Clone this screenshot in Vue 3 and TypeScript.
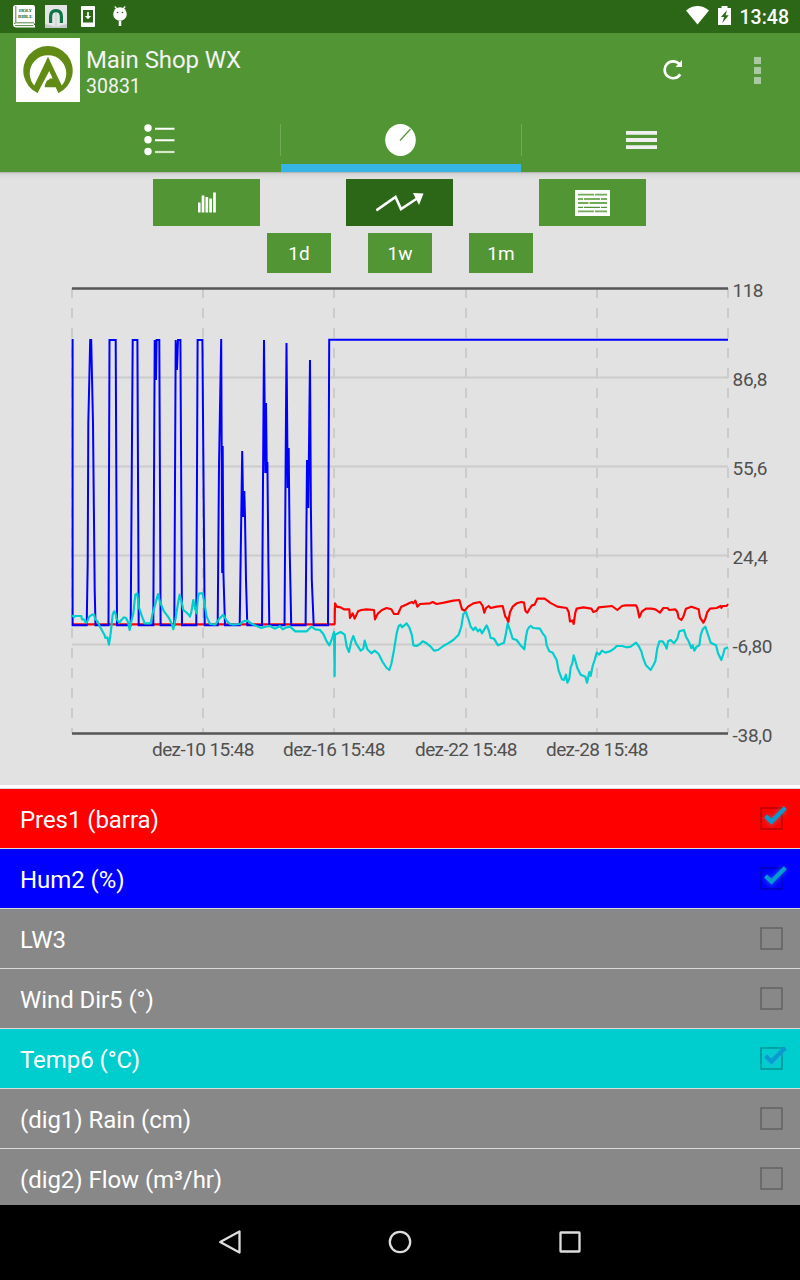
<script setup lang="ts">
interface Sensor {
  name: string
  color: string
  checked: boolean
}

interface TraceSection {
  x: number
  points: string
}

const sensors: Sensor[] = [
  { name: 'Pres1 (barra)', color: 'red', checked: true },
  { name: 'Hum2 (%)', color: 'blue', checked: true },
  { name: 'LW3', color: 'gray', checked: false },
  { name: 'Wind Dir5 (°)', color: 'gray', checked: false },
  { name: 'Temp6 (°C)', color: 'cyan', checked: true },
  { name: '(dig1) Rain (cm)', color: 'gray', checked: false },
  { name: '(dig2) Flow (m³/hr)', color: 'gray', checked: false },
]

const ranges: string[] = ['1d', '1w', '1m']
const gridX: number[] = [72, 203, 334, 466, 597, 728]
const gridY: number[] = [377.5, 466.5, 555.5, 644.5]

const yLabels = [
  { text: '118', y: 297, width: 31 },
  { text: '86,8', y: 386, width: 35 },
  { text: '55,6', y: 475, width: 35 },
  { text: '24,4', y: 564, width: 35.5 },
  { text: '-6,80', y: 653, width: 40 },
  { text: '-38,0', y: 742, width: 40 },
]

const xLabels = [
  { text: 'dez-10 15:48', x: 152 },
  { text: 'dez-16 15:48', x: 283 },
  { text: 'dez-22 15:48', x: 415 },
  { text: 'dez-28 15:48', x: 546 },
]

const humidity =
  'M72.6 339V625.3H86.7L87.7 563L88.3 423L90.2 340H91.2L93 423L94.7 590L95.5 625.3' +
  'H108.5L109.5 340H115.7L117 625.3H130.7L131.5 510L132.7 340H137.4L138.7 625.3' +
  'H153.3L154.7 340L156 380L156.6 340H159.3L160.6 625.3H174.3L175.7 340L177 370L178 340H180.4L182 625.3' +
  'H196.3L197.6 340H202.4L204.7 625.3H217.7L219 465L221.200 339L222.2 573L222.7 446L223.4 573L225 625.3' +
  'H239.7L241.3 513L242.2 451L243.3 517L244.3 491L245 517L246 580L247.3 625.3' +
  'H262L264 340L265.3 473L266 403L266.8 473L267.4 462L268.4 563L269.3 625.3' +
  'H284.5L286.5 343L287.7 488L288.7 448L289.7 550L291.2 625.3' +
  'H305.6L307 460L308.3 508L310 360L310.9 508L311.8 580L313.7 625.3H328L329.2 339.7H728'

const pressure: TraceSection[] = [
  { x: 60, points: '38,133 824,133' },
  { x: 320, points: '42,133 44,132 45,70 50,80 62,82 72,88 88,88 90,114 98,100 104,116 114,94 124,90 140,88 162,90 165,118 174,100 186,90 200,84 214,88 222,102 234,102 244,80 258,74 270,68 276,66 280,70 286,62 292,80 300,72 330,70 338,66 350,72 372,68 400,62 418,60 426,88 434,92 444,80 460,70 480,66 488,78 493,98 498,84 506,78 512,84 530,80 548,78 556,110 560,114 565,126 570,96 578,80 590,70 604,66 612,68 616,92 622,98 630,84' },
  { x: 530, points: '0,84 6,76 14,74 22,56 44,56 60,68 82,80 110,84 116,96 120,124 128,122 131,132 136,98 140,86 160,82 184,86 190,96 200,92 206,82 246,78 262,90 276,78 286,76 318,76 322,84 328,112 336,94 348,86 364,86 376,88 390,98 400,84 412,84 418,90 436,88 442,96 446,114 454,120 460,110 468,86 484,80 506,88 510,112 520,128 526,116 532,96 540,86 560,84 572,78 574,84 578,78 590,78 594,72' },
]

const temperature: TraceSection[] = [
  { x: 60, points: '36,106 42,112 46,108 64,108 66,118 72,118 76,126 80,128 88,110 96,104 102,104 106,118 112,124 120,140 134,166 136,174 142,172 147,194 152,160 158,104 162,94 166,98 170,118 178,128 184,120 192,112 198,114 204,126 209,150 214,124 220,100 226,44 232,40 236,80 244,104 254,130 272,130 278,100 286,72 294,42 300,66 312,94 324,110 330,120 336,134 340,148 346,120 354,70 359,44 364,62 370,90 378,96 386,104 390,110 394,96 400,60 404,80 410,100 414,50 418,40 428,40 434,74 440,110 450,132 466,134 478,116 490,104 500,122 510,132 520,134 540,132 550,124 562,122 576,132 590,138 604,144 616,140 630,138 644,146 660,138 668,148 680,142 690,140 706,154 740,154 754,140 766,148 780,150 790,162 800,184 808,196 816,176 822,156 824,288 825,164' },
  { x: 320, points: '45,164 54,160 62,156 74,164 80,200 87,216 94,184 100,168 108,190 122,212 130,206 134,182 142,208 154,220 164,212 176,222 188,246 200,264 208,270 214,252 222,210 230,160 236,138 242,134 246,142 260,130 268,142 276,166 280,196 290,198 300,192 308,184 320,190 332,200 342,212 354,210 370,198 384,190 400,180 416,164 424,140 430,102 438,96 446,120 452,140 460,150 466,142 474,154 480,148 486,160 500,136 506,150 512,174 522,176 534,196 552,188 558,160 563,130 570,150 578,176 590,180 600,194 613,208 618,170 622,150 630,138' },
  { x: 530, points: '0,136 10,144 30,146 38,160 46,170 50,196 58,214 68,218 80,240 86,272 96,298 102,300 108,284 112,308 118,296 122,262 127,250 131,226 136,242 142,264 152,284 166,290 171,308 178,276 182,288 188,258 194,240 200,218 208,224 216,212 226,218 240,214 252,206 260,198 276,198 290,202 302,200 318,188 326,198 334,214 340,236 348,256 362,270 370,256 376,244 382,204 388,184 398,184 406,196 410,206 414,184 422,180 432,190 442,176 448,154 462,150 468,170 476,184 484,204 488,196 493,212 500,200 508,196 512,166 518,148 526,140 532,158 542,188 558,196 564,220 574,240 580,222 584,206 594,202' },
]
</script>

<template>
  <div class="screen">
    <header class="status">
      <div class="notifications">
        <svg class="n-book" width="22" height="23" viewBox="0 0 22 23">
          <path d="M3 0H20Q22 0 22 2V18.500H21V20H22V22.500H3.500Q0 22.500 0 19V3Q0 0 3 0Z" fill="#fff" />
          <path d="M2.800 1V17.500M1 19Q1.500 17.800 3.500 17.800H21M2 20.600H20.500" fill="none" stroke="#2c6717" stroke-width=".8" />
          <text x="6" y="7" textLength="13" class="bible">HOLY</text>
          <text x="5" y="12.500" textLength="14.500" class="bible">BIBLE</text>
        </svg>
        <svg class="n-arch" width="22" height="23" viewBox="0 0 22 23">
          <rect width="22" height="23" fill="#e4e5e5" />
          <path d="M0 19L11 22L22 19V23H0Z" fill="#c4c8c8" />
          <path d="M11 6V22" stroke="#c9caca" />
          <path d="M5.600 18V11.500Q5.600 5.600 11 5.600T16.400 11.500V18" fill="none" stroke="#0d7444" stroke-width="3.200" />
        </svg>
        <svg class="n-down" width="14" height="21" viewBox="0 0 14 21">
          <rect width="14" height="21" rx="1" fill="#fff" />
          <rect x="2" y="4" width="10" height="12.500" fill="#2c6717" />
          <path d="M6.200 6H7.800V10H10.200L7 13.300L3.800 10H6.200Z" fill="#fff" />
        </svg>
        <svg class="n-droid" width="14" height="21" viewBox="0 0 14 21">
          <path d="M1.800 .5L4 3M12.200 .5L10 3" stroke="#fff" stroke-width="1.400" />
          <path d="M7 14.500V20" stroke="#fff" stroke-width="2.600" />
          <ellipse cx="7" cy="8" rx="6.800" ry="6.700" fill="#fff" />
          <circle cx="4.500" cy="6.500" r=".8" fill="#2c6717" /><circle cx="9.500" cy="6.500" r=".8" fill="#2c6717" />
        </svg>
      </div>
      <div class="system">
        <svg width="23" height="19" viewBox="0 0 23 19"><path d="M0 4.500Q11.500-4.400 23 4.500L11.500 18.500Z" fill="#fff" /></svg>
        <svg class="battery" width="13" height="19" viewBox="0 0 13 19">
          <path d="M0 2H3.500V0H9.500V2H13V19H0Z" fill="#fff" />
          <path d="M9 4L3 11H6.200L4.300 17L10.700 9.300H7.500Z" fill="#2c6717" />
        </svg>
        <span class="clock">13:48</span>
      </div>
    </header>

    <div class="appbar">
      <svg class="logo" width="64" height="64" viewBox="0 0 64 64">
        <rect width="64" height="64" fill="#fff" />
        <path d="M21.500 55A24.700 24.700 0 1 1 42.500 55L39.800 49.300H28.800L30 44.500L34 40.500H36.800L32 30.500L21.500 55Z" fill="#628b16" />
        <path d="M19.500 48.800A18.300 18.300 0 1 1 44.500 48.800L32 19Z" fill="#fff" />
        <path d="M32 19L46.500 49L42.500 55L39.500 48.500H28.500L31 42.500L37 41L33.500 32.500L21.500 55L17.500 49Z" fill="#628b16" />
      </svg>
      <div class="titles">
        <div class="title">Main Shop WX</div>
        <div class="subtitle">30831</div>
      </div>
      <svg class="refresh" width="20" height="20" viewBox="0 0 20 20">
        <path d="M16.300 4.200A8.400 8.400 0 1 0 17.200 14.200" fill="none" stroke="#fff" stroke-width="2.600" />
        <path d="M19 0V7H12.500Z" fill="#fff" />
      </svg>
      <div class="overflow"><i /><i /><i /></div>
    </div>

    <nav class="tabs">
      <div class="tab">
        <svg width="32" height="32" viewBox="0 0 32 32">
          <g fill="#fff"><circle cx="4" cy="4" r="3.700" /><circle cx="4" cy="15.700" r="3.700" /><circle cx="4" cy="27.500" r="3.700" /></g>
          <path d="M11 4.700H30.500M11 16.300H30.500" stroke="#fff" stroke-width="2" />
          <path d="M11 28H30.500" stroke="#d6e7cc" stroke-width="2.200" />
        </svg>
      </div>
      <div class="tab active">
        <svg width="32" height="32" viewBox="0 0 32 32">
          <ellipse cx="15.500" cy="16" rx="15.300" ry="16" fill="#fff" />
          <path d="M15 16.500L25.500 5" stroke="#529535" stroke-width="1.200" />
        </svg>
      </div>
      <div class="tab">
        <svg width="31" height="18" viewBox="0 0 31 18"><path d="M0 1.900H31M0 9H31M0 16.100H31" stroke="#f0f0f0" stroke-width="3.900" /></svg>
      </div>
    </nav>

    <main class="content">
      <div class="modes">
        <div class="mode">
          <svg width="18" height="21" viewBox="0 0 18 21"><path d="M1.200 20.500V10.500M5 20.500V3.500M8.800 20.500V5M12.600 20.500V6.500M16.500 20.500V.5" stroke="#fff" stroke-width="2.700" /></svg>
        </div>
        <div class="mode selected">
          <svg width="48" height="22" viewBox="0 0 48 22">
            <path d="M.3 18.500L19.500 5L25 17L41 6.500" fill="none" stroke="#fff" stroke-width="2.600" />
            <path d="M37 1L47.500 1.500L43 13Z" fill="#fff" />
          </svg>
        </div>
        <div class="mode">
          <svg width="35" height="26" viewBox="0 0 35 26">
            <rect width="35" height="26" fill="#fff" />
            <g fill="none" stroke="#72a95b" stroke-width="1.800">
              <path d="M3 4.700H19M20 4.700H32M3 13H13.500M14.500 13H32M3 21.300H19M20 21.300H32" />
            </g>
            <path d="M3 9H8M9 9H25M26 9H32M3 17.300H8M9 17.300H25M26 17.300H32" stroke="#529535" stroke-width="1.300" />
          </svg>
        </div>
      </div>
      <div class="ranges">
        <div v-for="r in ranges" :key="r" class="range">{{ r }}</div>
      </div>

      <svg class="chart" width="800" height="512" viewBox="0 273 800 512">
        <g stroke="#cbcbcb" stroke-width="2">
          <line v-for="y in gridY" :key="y" x1="72" x2="728" :y1="y" :y2="y" />
          <line v-for="x in gridX" :key="x" :x1="x" :x2="x" y1="288" y2="733" stroke-dasharray="10 10" />
        </g>
        <path d="M72 288.500H728M72 733.500H728" stroke="#555" stroke-width="2.600" />
        <g class="trace pressure">
          <polyline v-for="s in pressure" :key="s.x" :points="s.points" :transform="`translate(${s.x} 580) scale(.33333)`" />
        </g>
        <path class="humidity" :d="humidity" />
        <g class="trace temperature">
          <polyline v-for="s in temperature" :key="s.x" :points="s.points" :transform="`translate(${s.x} 580) scale(.33333)`" />
        </g>
        <g class="axis">
          <text v-for="l in yLabels" :key="l.text" x="732.500" :y="l.y" :textLength="l.width" lengthAdjust="spacing">{{ l.text }}</text>
          <text v-for="l in xLabels" :key="l.text" :x="l.x" y="756" textLength="102.500" lengthAdjust="spacing">{{ l.text }}</text>
        </g>
      </svg>
    </main>

    <ul class="sensors">
      <li v-for="s in sensors" :key="s.name" :class="['sensor', s.color]">
        <span>{{ s.name }}</span>
        <svg width="40" height="40" viewBox="0 0 40 40">
          <rect x="9" y="9" width="21" height="21" fill="none" stroke="#000" stroke-opacity=".3" stroke-width="1.400" />
          <template v-if="s.checked">
            <path class="glow" d="M14 17.500L19.500 23L32.500 9.500" />
            <path class="tick" d="M13.500 17L19.500 22.500L33.300 8.700" />
          </template>
        </svg>
      </li>
    </ul>

    <footer class="navbar">
      <svg width="24" height="26" viewBox="0 0 24 26"><path d="M21.500 2.500V23.500L2.200 13Z" /></svg>
      <svg width="24" height="26" viewBox="0 0 24 26"><circle cx="12" cy="13" r="10.200" /></svg>
      <svg width="24" height="26" viewBox="0 0 24 26"><rect x="2.500" y="3.500" width="19" height="19" rx=".5" /></svg>
    </footer>
  </div>
</template>

<style>
body {
  margin: 0;
}
</style>

<style scoped>
.screen {
  width: 800px;
  height: 1280px;
  display: flex;
  flex-direction: column;
  overflow: hidden;
  background: #fff;
  font-family: Roboto, "Liberation Sans", sans-serif;
  color: #fff;
}
svg {
  display: block;
  flex: none;
}
.status {
  height: 33px;
  flex: none;
  display: flex;
  justify-content: space-between;
  background: #2c6717;
}
.notifications {
  display: flex;
  padding: 5px 0 0 13px;
}
.n-arch {
  margin-left: 10px;
}
.n-down {
  margin: 1px 0 0 14px;
}
.n-droid {
  margin: 1px 0 0 18px;
}
.bible {
  font: 700 5px "Liberation Serif", serif;
  fill: #2c6717;
}
.system {
  display: flex;
  align-items: flex-start;
  padding: 6px 11px 0 0;
}
.battery {
  margin-left: 9px;
}
.clock {
  margin-left: 9px;
  font-size: 19.500px;
  font-weight: 500;
  line-height: 23px;
  white-space: nowrap;
}
.appbar {
  height: 73px;
  flex: none;
  display: flex;
  background: #529535;
}
.logo {
  margin: 5px 0 0 16px;
}
.titles {
  margin: 11px 0 0 6px;
  flex: 1;
  color: #f3f3f3;
}
.title {
  font-size: 24px;
  line-height: 32px;
  letter-spacing: -0.080px;
}
.subtitle {
  font-size: 19.500px;
  line-height: 22px;
}
.refresh {
  margin: 27px 0 0;
}
.overflow {
  display: flex;
  flex-direction: column;
  gap: 3px;
  margin: 24px 39px 0 71px;
}
.overflow i {
  width: 7px;
  height: 7px;
  background: #a9caa0;
}
.tabs {
  height: 66px;
  flex: none;
  display: flex;
  background: #529535;
}
.tab {
  flex: 1;
  display: flex;
  justify-content: center;
  align-items: center;
  box-sizing: border-box;
  padding-top: 2px;
}
.tab:first-child {
  flex: 0 0 281px;
  padding-left: 38px;
}
.tab.active {
  flex: 0 0 240px;
  padding-top: 10px;
  border-bottom: 8px solid #36b5e5;
  position: relative;
}
.tab.active::before,
.tab.active::after {
  content: "";
  position: absolute;
  top: 18px;
  width: 1px;
  height: 32px;
  background: #71a956;
}
.tab.active::before {
  left: -1px;
}
.tab.active::after {
  right: -1px;
}
.tab:last-child {
  padding-right: 38px;
}
.content {
  height: 613px;
  flex: none;
  background: linear-gradient(#a6a6a6 0, #c8c8c8 1px, #d5d5d5 2px, #dedede 5px, #e2e2e2 8px);
}
.modes {
  display: flex;
  justify-content: center;
  gap: 86px;
  padding: 7px 1px 7px 0;
}
.mode {
  width: 107px;
  height: 47px;
  display: flex;
  align-items: center;
  justify-content: center;
  background: #529535;
}
.mode.selected {
  background: #2c6717;
}
.ranges {
  display: flex;
  justify-content: center;
  gap: 37px;
}
.range {
  width: 64px;
  height: 40px;
  background: #529535;
  font-size: 19px;
  line-height: 41px;
  text-align: center;
}
.humidity {
  fill: none;
  stroke: #00f;
  stroke-width: 2;
}
.trace {
  fill: none;
  stroke-width: 6.500;
  stroke-linejoin: round;
}
.pressure {
  stroke: #f00;
}
.temperature {
  stroke: #00cdcd;
}
.axis {
  font-size: 19px;
  fill: #505050;
}
.sensors {
  list-style: none;
  margin: 3px 0 0;
  padding: 0;
  height: 417px;
  flex: none;
  overflow: hidden;
}
.sensor {
  height: 60px;
  box-sizing: border-box;
  border-top: 1px solid #dadada;
  display: flex;
  justify-content: space-between;
  align-items: center;
  padding: 3px 8px 0 20px;
  font-size: 24px;
  letter-spacing: -0.060px;
}
.sensor svg {
  margin-top: -2px;
}
.red {
  background: #f00;
}
.blue {
  background: #00f;
}
.gray {
  background: #888;
}
.cyan {
  background: #00cdcd;
}
.glow {
  fill: none;
  stroke: #33b5e5;
  stroke-width: 7;
  stroke-opacity: .35;
  filter: blur(2px);
}
.tick {
  fill: none;
  stroke: #099bcf;
  stroke-width: 4.200;
}
.navbar {
  height: 75px;
  flex: none;
  display: flex;
  justify-content: center;
  align-items: center;
  gap: 146px;
  box-sizing: border-box;
  padding-bottom: 1px;
  background: #000;
}
.navbar svg {
  fill: none;
  stroke: #ddd;
  stroke-width: 2.300;
  stroke-linejoin: round;
}
</style>
